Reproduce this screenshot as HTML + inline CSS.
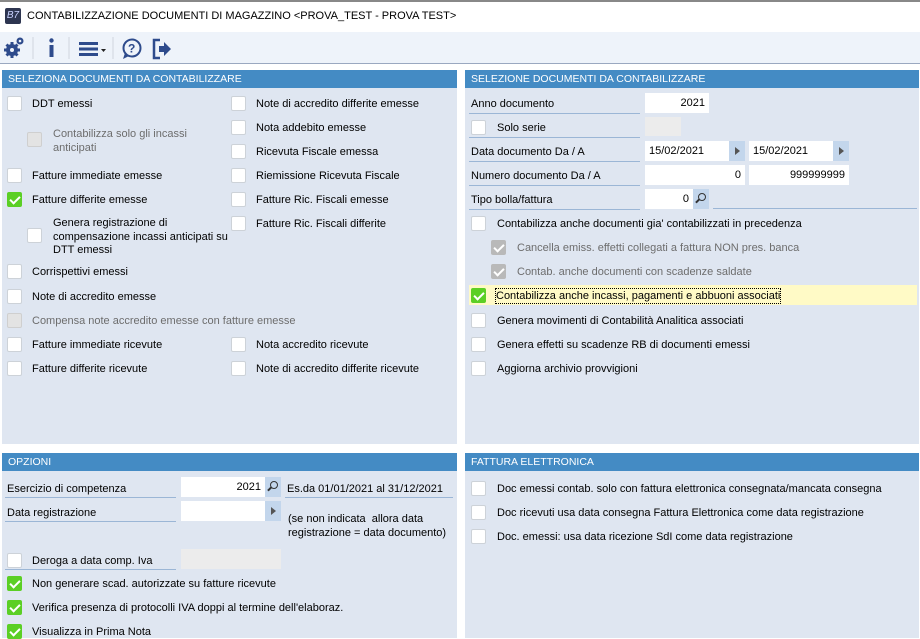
<!DOCTYPE html>
<html><head><meta charset="utf-8"><style>
*{margin:0;padding:0;box-sizing:border-box}
body{width:920px;height:638px;background:#fff;font-family:"Liberation Sans",Tahoma,sans-serif;font-size:11px;color:#000;position:relative;overflow:hidden}
.a{position:absolute;white-space:nowrap}
.panel{position:absolute;background:#dfe6f1}
.hd{position:absolute;left:0;right:0;top:0;height:18px;background:#448bc4;color:#fff;font-size:10.5px;line-height:19px;padding-left:6px}
.cb{position:absolute;width:15px;height:15px;background:#fff;border:1px solid #cdd2d8;border-radius:2px}
.cb.on{background:#5bcf25;border-color:#5bcf25}
.cb.dis{background:#e3e3e3;border-color:#cfcfcf}
.cb.gon{background:#b9b9b9;border-color:#b9b9b9}
.cb.on::after,.cb.gon::after{content:"";position:absolute;left:4px;top:1px;width:4px;height:8px;border:solid #fff;border-width:0 2px 2px 0;transform:rotate(45deg)}
.t{position:absolute;white-space:nowrap;line-height:14px;margin-top:1px}
.g{color:#6d6d6d}
.inp{position:absolute;background:#fff;height:20px;line-height:21px;padding:0 4px}
.btn{position:absolute;background:#c3d6ec;height:20px}
.btn.tri::after{content:"";position:absolute;left:6px;top:6px;border-left:5px solid #555;border-top:4px solid transparent;border-bottom:4px solid transparent}
.ul{position:absolute;height:1px;background:#9bb6d6}
.mag{position:absolute;left:5px;top:4px;width:8px;height:8px;border:1.5px solid #333;border-radius:50%}
.mag::after{content:"";position:absolute;left:-4px;top:6px;width:5px;height:1.5px;background:#333;transform:rotate(-45deg)}
</style></head><body>
<div class="a" style="left:0;top:0;width:920px;height:2px;background:#888"></div>
<div class="a" style="left:5px;top:8px;width:16px;height:16px;background:#2d3550;border-radius:2px;color:#c9d2ff;font-size:10px;font-style:italic;line-height:16px;text-align:center">B7</div>
<div class="a" style="left:27px;top:10px;font-size:11px">CONTABILIZZAZIONE DOCUMENTI DI MAGAZZINO &lt;PROVA_TEST - PROVA TEST&gt;</div>
<div class="a" style="left:0;top:32px;width:920px;height:31px;background:#eef3fa"></div>
<div class="a" style="left:0;top:63px;width:920px;height:1px;background:#9aa8c0"></div>
<svg class="a" style="left:0;top:32px" width="180" height="31">
<g fill="#2e4b8c"><circle cx="12" cy="18" r="6"/><g stroke="#2e4b8c" stroke-width="3"><line x1="12" y1="10" x2="12" y2="26"/><line x1="4" y1="18" x2="20" y2="18"/><line x1="6.5" y1="12.5" x2="17.5" y2="23.5"/><line x1="6.5" y1="23.5" x2="17.5" y2="12.5"/></g><circle cx="12" cy="18" r="2" fill="#eef3fa"/><circle cx="20" cy="9" r="3.5"/><circle cx="20" cy="9" r="1.3" fill="#eef3fa"/></g>
<line x1="33" y1="5" x2="33" y2="27" stroke="#d0d6df"/>
<rect x="49.5" y="13" width="4" height="12" fill="#2e4b8c"/><circle cx="51.5" cy="8.5" r="2.2" fill="#2e4b8c"/>
<line x1="69" y1="5" x2="69" y2="27" stroke="#d0d6df"/>
<g fill="#2e4b8c"><rect x="79" y="10" width="19" height="3"/><rect x="79" y="15.5" width="19" height="3"/><rect x="79" y="21" width="19" height="3"/><path d="M101 17h5l-2.5 3z" fill="#222"/></g>
<line x1="113" y1="5" x2="113" y2="27" stroke="#d0d6df"/>
<circle cx="132" cy="16" r="8.5" fill="none" stroke="#2e4b8c" stroke-width="2"/><path d="M125 21l-2 6 6-3z" fill="#2e4b8c"/>
<text x="128" y="20.5" font-size="12" font-weight="bold" fill="#2e4b8c" font-family="Liberation Sans">?</text>
<path d="M160 8h-6v18h6" fill="none" stroke="#2e4b8c" stroke-width="2.5"/><path d="M159 14h5v-4l7 7-7 7v-4h-5z" fill="#2e4b8c"/>
</svg>

<div class="panel" style="left:2px;top:70px;width:455px;height:374px"><div class="hd">SELEZIONA DOCUMENTI DA CONTABILIZZARE</div></div>
<div class="cb" style="left:7px;top:96px"></div><div class="t" style="left:32px;top:96px">DDT emessi</div>
<div class="cb dis" style="left:27px;top:132px"></div><div class="t g" style="left:53px;top:126px">Contabilizza solo gli incassi<br>anticipati</div>
<div class="cb" style="left:7px;top:168px"></div><div class="t" style="left:32px;top:168px">Fatture immediate emesse</div>
<div class="cb on" style="left:7px;top:192px"></div><div class="t" style="left:32px;top:192px">Fatture differite emesse</div>
<div class="cb" style="left:27px;top:228px"></div><div class="t" style="left:53px;top:216px;line-height:13.5px">Genera registrazione di<br>compensazione incassi anticipati su<br>DTT emessi</div>
<div class="cb" style="left:7px;top:264px"></div><div class="t" style="left:32px;top:264px">Corrispettivi emessi</div>
<div class="cb" style="left:7px;top:289px"></div><div class="t" style="left:32px;top:289px">Note di accredito emesse</div>
<div class="cb dis" style="left:7px;top:313px"></div><div class="t g" style="left:32px;top:313px">Compensa note accredito emesse con fatture emesse</div>
<div class="cb" style="left:7px;top:337px"></div><div class="t" style="left:32px;top:337px">Fatture immediate ricevute</div>
<div class="cb" style="left:7px;top:361px"></div><div class="t" style="left:32px;top:361px">Fatture differite ricevute</div>
<div class="cb" style="left:231px;top:96px"></div><div class="t" style="left:256px;top:96px">Note di accredito differite emesse</div>
<div class="cb" style="left:231px;top:120px"></div><div class="t" style="left:256px;top:120px">Nota addebito emesse</div>
<div class="cb" style="left:231px;top:144px"></div><div class="t" style="left:256px;top:144px">Ricevuta Fiscale emessa</div>
<div class="cb" style="left:231px;top:168px"></div><div class="t" style="left:256px;top:168px">Riemissione Ricevuta Fiscale</div>
<div class="cb" style="left:231px;top:192px"></div><div class="t" style="left:256px;top:192px">Fatture Ric. Fiscali emesse</div>
<div class="cb" style="left:231px;top:216px"></div><div class="t" style="left:256px;top:216px">Fatture Ric. Fiscali differite</div>
<div class="cb" style="left:231px;top:337px"></div><div class="t" style="left:256px;top:337px">Nota accredito ricevute</div>
<div class="cb" style="left:231px;top:361px"></div><div class="t" style="left:256px;top:361px">Note di accredito differite ricevute</div>

<div class="panel" style="left:465px;top:70px;width:454px;height:374px"><div class="hd">SELEZIONE DOCUMENTI DA CONTABILIZZARE</div></div>
<div class="t" style="left:471px;top:96px">Anno documento</div><div class="ul" style="left:469px;top:113px;width:171px"></div>
<div class="inp" style="left:645px;top:93px;width:64px;text-align:right">2021</div>
<div class="cb" style="left:471px;top:120px"></div><div class="t" style="left:497px;top:120px">Solo serie</div><div class="ul" style="left:469px;top:137px;width:171px"></div>
<div class="a" style="left:645px;top:117px;width:36px;height:19px;background:#ececec"></div>
<div class="t" style="left:471px;top:144px">Data documento Da / A</div><div class="ul" style="left:469px;top:161px;width:171px"></div>
<div class="inp" style="left:645px;top:141px;width:84px">15/02/2021</div><div class="btn tri" style="left:729px;top:141px;width:16px"></div>
<div class="inp" style="left:749px;top:141px;width:84px">15/02/2021</div><div class="btn tri" style="left:833px;top:141px;width:16px"></div>
<div class="t" style="left:471px;top:168px">Numero documento Da / A</div><div class="ul" style="left:469px;top:185px;width:171px"></div>
<div class="inp" style="left:645px;top:165px;width:100px;text-align:right">0</div>
<div class="inp" style="left:749px;top:165px;width:100px;text-align:right">999999999</div>
<div class="t" style="left:471px;top:192px">Tipo bolla/fattura</div><div class="ul" style="left:469px;top:209px;width:171px"></div>
<div class="inp" style="left:645px;top:189px;width:48px;text-align:right">0</div><div class="btn" style="left:693px;top:189px;width:16px"><div class="mag"></div></div>
<div class="ul" style="left:713px;top:208px;width:204px"></div>
<div class="cb" style="left:471px;top:216px"></div><div class="t" style="left:497px;top:216px">Contabilizza anche documenti gia' contabilizzati in precedenza</div>
<div class="cb gon" style="left:491px;top:240px"></div><div class="t g" style="left:517px;top:240px">Cancella emiss. effetti collegati a fattura NON pres. banca</div>
<div class="cb gon" style="left:491px;top:264px"></div><div class="t g" style="left:517px;top:264px">Contab. anche documenti con scadenze saldate</div>
<div class="a" style="left:469px;top:285px;width:448px;height:20px;background:#fffac6"></div>
<div class="cb on" style="left:471px;top:288px"></div><div class="t" style="left:496px;top:288px;outline:1px dotted #000">Contabilizza anche incassi, pagamenti e abbuoni associati</div>
<div class="cb" style="left:471px;top:313px"></div><div class="t" style="left:497px;top:313px">Genera movimenti di Contabilità Analitica associati</div>
<div class="cb" style="left:471px;top:337px"></div><div class="t" style="left:497px;top:337px">Genera effetti su scadenze RB di documenti emessi</div>
<div class="cb" style="left:471px;top:361px"></div><div class="t" style="left:497px;top:361px">Aggiorna archivio provvigioni</div>

<div class="panel" style="left:2px;top:453px;width:455px;height:185px"><div class="hd">OPZIONI</div></div>
<div class="t" style="left:7px;top:481px">Esercizio di competenza</div><div class="ul" style="left:5px;top:497px;width:171px"></div>
<div class="inp" style="left:181px;top:477px;width:84px;text-align:right">2021</div><div class="btn" style="left:265px;top:477px;width:16px"><div class="mag"></div></div>
<div class="t" style="left:287px;top:481px">Es.da 01/01/2021 al 31/12/2021</div><div class="ul" style="left:285px;top:497px;width:168px"></div>
<div class="t" style="left:7px;top:505px">Data registrazione</div><div class="ul" style="left:5px;top:521px;width:171px"></div>
<div class="inp" style="left:181px;top:501px;width:84px"></div><div class="btn tri" style="left:265px;top:501px;width:16px"></div>
<div class="t" style="left:288px;top:511px">(se non indicata&nbsp; allora data<br>registrazione = data documento)</div>
<div class="cb" style="left:7px;top:553px"></div><div class="t" style="left:32px;top:553px">Deroga a data comp. Iva</div><div class="ul" style="left:5px;top:569px;width:171px"></div>
<div class="a" style="left:181px;top:549px;width:100px;height:20px;background:#ececec"></div>
<div class="cb on" style="left:7px;top:576px"></div><div class="t" style="left:32px;top:576px">Non generare scad. autorizzate su fatture ricevute</div>
<div class="cb on" style="left:7px;top:600px"></div><div class="t" style="left:32px;top:600px">Verifica presenza di protocolli IVA doppi al termine dell'elaboraz.</div>
<div class="cb on" style="left:7px;top:624px"></div><div class="t" style="left:32px;top:624px">Visualizza in Prima Nota</div>

<div class="panel" style="left:465px;top:453px;width:454px;height:185px"><div class="hd">FATTURA ELETTRONICA</div></div>
<div class="cb" style="left:471px;top:481px"></div><div class="t" style="left:497px;top:481px">Doc emessi contab. solo con fattura elettronica consegnata/mancata consegna</div>
<div class="cb" style="left:471px;top:505px"></div><div class="t" style="left:497px;top:505px">Doc ricevuti usa data consegna Fattura Elettronica come data registrazione</div>
<div class="cb" style="left:471px;top:529px"></div><div class="t" style="left:497px;top:529px">Doc. emessi: usa data ricezione SdI come data registrazione</div>
</body></html>
